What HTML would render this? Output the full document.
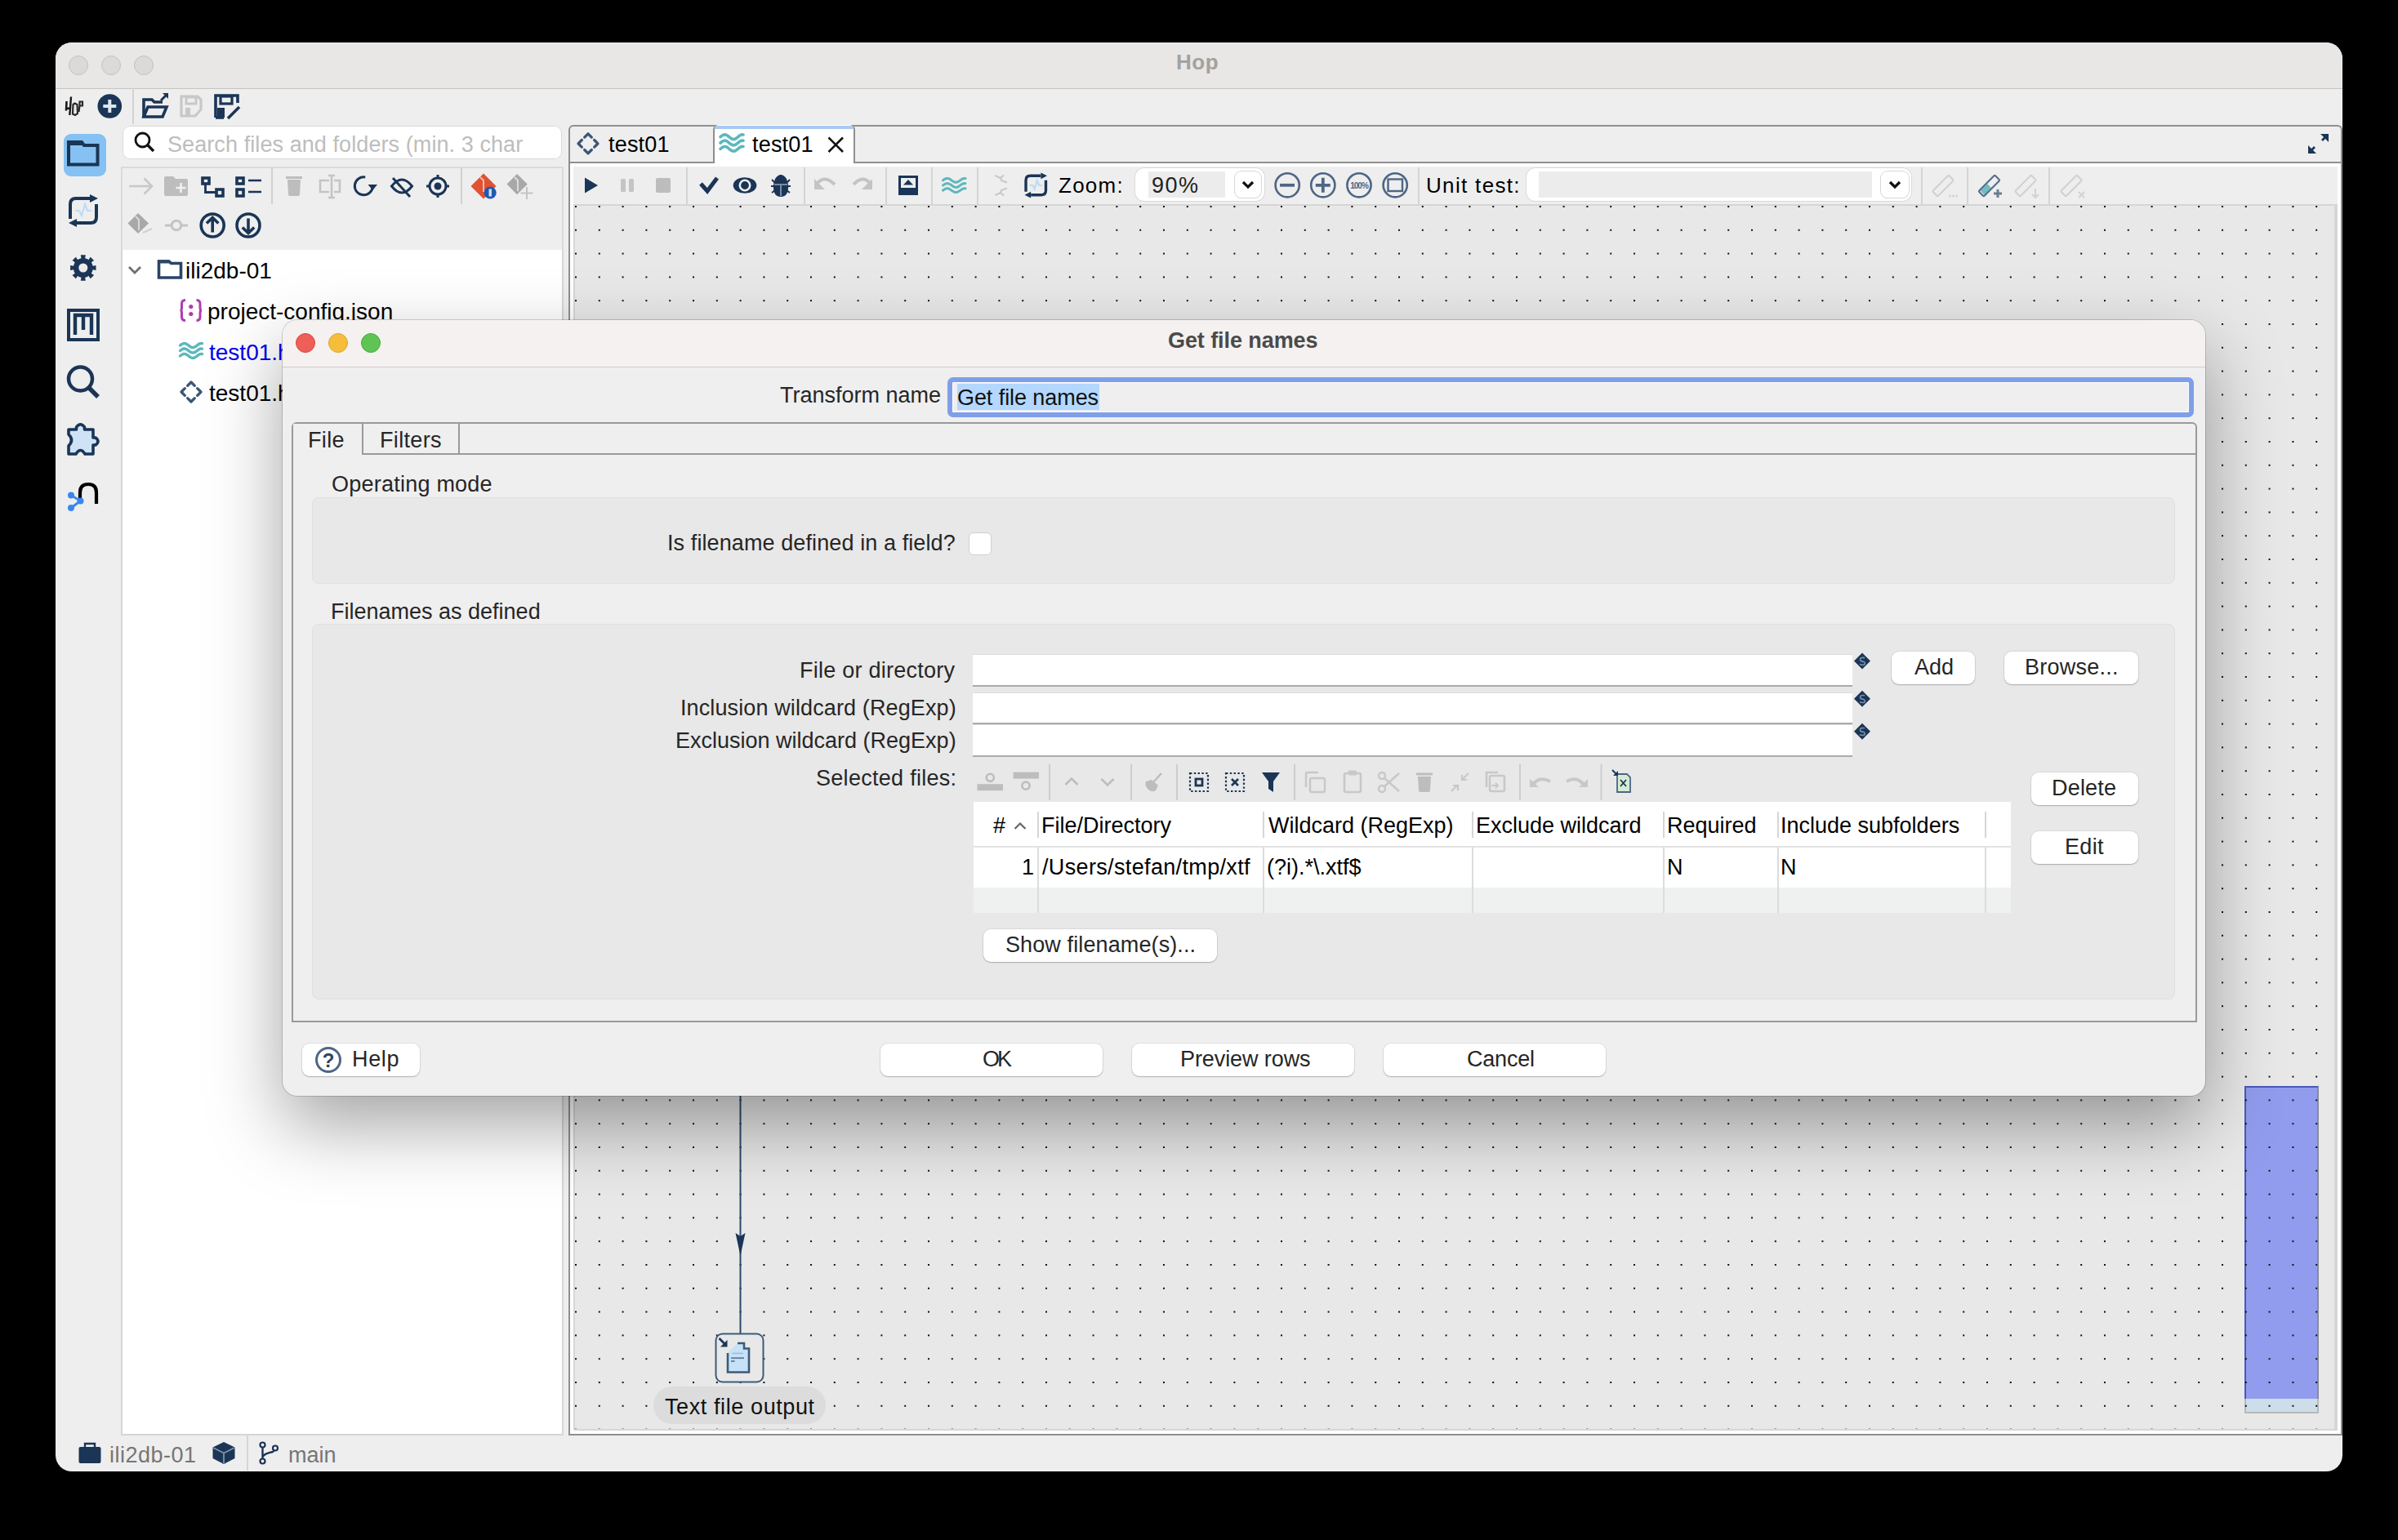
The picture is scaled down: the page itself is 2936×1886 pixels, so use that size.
<!DOCTYPE html>
<html><head><meta charset="utf-8"><title>Hop - Get file names</title>
<style>
html,body{margin:0;padding:0;}
body{width:2936px;height:1886px;background:#000;position:relative;overflow:hidden;font-family:"Liberation Sans", sans-serif;}
</style></head><body>
<div style="position:absolute;left:68px;top:52px;width:2800px;height:1750px;border-radius:20px;background:#eeeeee;overflow:hidden"></div>
<div style="position:absolute;left:68px;top:52px;width:2800px;height:56px;background:#e9e7e5;border-radius:20px 20px 0 0;border-bottom:1px solid #c4c4c4"></div>
<div style="position:absolute;left:84px;top:68px;width:24px;height:24px;border-radius:50%;background:#dcdad9;border:1px solid #c4c2c1;box-sizing:border-box"></div>
<div style="position:absolute;left:124px;top:68px;width:24px;height:24px;border-radius:50%;background:#dcdad9;border:1px solid #c4c2c1;box-sizing:border-box"></div>
<div style="position:absolute;left:164px;top:68px;width:24px;height:24px;border-radius:50%;background:#dcdad9;border:1px solid #c4c2c1;box-sizing:border-box"></div>
<div style="position:absolute;left:1440.00px;top:63px;font-size:26px;line-height:1;color:#a2a2a0;white-space:nowrap;font-weight:700;letter-spacing:0.500px;">Hop</div>
<div style="position:absolute;left:150px;top:154px;width:538px;height:41px;background:#fff;border-radius:9px;box-shadow:0 0 0 1px #d9d9d9 inset"></div>
<div style="position:absolute;left:205.00px;top:164px;font-size:27px;line-height:1;color:#bdbdbd;white-space:nowrap;letter-spacing:0.083px;">Search files and folders (min. 3 char</div>
<div style="position:absolute;left:148px;top:204px;width:542px;height:102px;border:2px solid #dadada;border-bottom:none;box-sizing:border-box"></div>
<div style="position:absolute;left:148px;top:306px;width:542px;height:1452px;background:#fff;border-left:2px solid #d6d6d6;border-right:2px solid #d6d6d6;border-bottom:2px solid #d6d6d6;box-sizing:border-box"></div>
<div style="position:absolute;left:227.00px;top:318px;font-size:28px;line-height:1;color:#000;white-space:nowrap;">ili2db-01</div>
<div style="position:absolute;left:254.00px;top:368px;font-size:28px;line-height:1;color:#000;white-space:nowrap;">project-config.json</div>
<div style="position:absolute;left:256.00px;top:418px;font-size:28px;line-height:1;color:#0000ee;white-space:nowrap;">test01.hwf</div>
<div style="position:absolute;left:256.00px;top:468px;font-size:28px;line-height:1;color:#000;white-space:nowrap;">test01.hpl</div>
<div style="position:absolute;left:696px;top:153px;width:2172px;height:47px;border:2px solid #8f8f8f;border-bottom:none;border-radius:6px 6px 0 0;box-sizing:border-box"></div>
<div style="position:absolute;left:696px;top:198px;width:2172px;height:2px;background:#8f8f8f"></div>
<div style="position:absolute;left:873px;top:153px;width:174px;height:47px;background:#fff;border-left:2px solid #8f8f8f;border-right:2px solid #8f8f8f;border-radius:6px 6px 0 0;box-sizing:border-box"></div>
<div style="position:absolute;left:875px;top:154px;width:170px;height:4px;background:#a8c9f4;border-radius:4px 4px 0 0"></div>
<div style="position:absolute;left:745.00px;top:164px;font-size:27px;line-height:1;color:#000;white-space:nowrap;letter-spacing:0.200px;">test01</div>
<div style="position:absolute;left:921.00px;top:164px;font-size:27px;line-height:1;color:#000;white-space:nowrap;letter-spacing:0.200px;">test01</div>
<div style="position:absolute;left:696px;top:200px;width:2172px;height:1558px;border-left:2px solid #8f8f8f;border-right:2px solid #8f8f8f;border-bottom:2px solid #8f8f8f;box-sizing:border-box;background:#fff"></div>
<div style="position:absolute;left:702px;top:204px;width:2160px;height:46px;background:#eeeeee"></div>
<div style="position:absolute;left:1296.00px;top:214px;font-size:26px;line-height:1;color:#000;white-space:nowrap;letter-spacing:1.250px;">Zoom:</div>
<div style="position:absolute;left:1746.00px;top:214px;font-size:26px;line-height:1;color:#000;white-space:nowrap;letter-spacing:1.333px;">Unit test:</div>
<div style="position:absolute;left:702px;top:250px;width:2160px;height:1502px;background:#d6d6d6"></div>
<div style="position:absolute;left:704px;top:252px;width:2154px;height:1498px;background:#e8e8e8"></div>
<div style="position:absolute;left:2748px;top:1330px;width:91px;height:383px;background:#919cee;border-top:2px solid #4a58b8;border-left:2px solid #4a58b8;border-right:2px solid #8a8a9a;box-sizing:border-box"></div>
<div style="position:absolute;left:2748px;top:1713px;width:91px;height:18px;background:#cddde9;border:2px solid #b8b8b8;border-top:none;box-sizing:border-box"></div>
<svg style="position:absolute;left:704px;top:252px" width="2154" height="1498"><defs><pattern id="dots" x="0" y="0" width="28.8" height="28.8" patternUnits="userSpaceOnUse"><rect x="0" y="0" width="2" height="2" fill="#111"/></pattern></defs><rect width="2154" height="1498" fill="url(#dots)"/></svg>
<div style="position:absolute;left:800px;top:1698px;width:211px;height:46px;background:#dcdcdc;border-radius:23px"></div>
<div style="position:absolute;left:814.00px;top:1710px;font-size:27px;line-height:1;color:#111;white-space:nowrap;letter-spacing:0.600px;">Text file output</div>
<div style="position:absolute;left:1390px;top:205.5px;width:158px;height:40.5px;background:#fff;border-radius:11px;box-shadow:0 0 0 1px #dadada"></div>
<div style="position:absolute;left:1406px;top:210px;width:94px;height:32px;background:#ececec"></div>
<div style="position:absolute;left:1410.00px;top:214px;font-size:27px;line-height:1;color:#222;white-space:nowrap;letter-spacing:1.500px;">90%</div>
<div style="position:absolute;left:1512px;top:210px;width:32px;height:32px;background:#fff;border-radius:8px;box-shadow:0 0 0 1px #d8d8d8, 0 1px 1px rgba(0,0,0,0.15)"></div>
<svg style="position:absolute;left:1512px;top:210px" width="32" height="32"><path d="M10,13 L16,19 L22,13" fill="none" stroke="#111" stroke-width="3.2"/></svg>
<div style="position:absolute;left:1869px;top:205.5px;width:471px;height:40.5px;background:#fff;border-radius:11px;box-shadow:0 0 0 1px #dadada"></div>
<div style="position:absolute;left:1884px;top:210px;width:408px;height:32px;background:#ececec"></div>
<div style="position:absolute;left:2303px;top:210px;width:34px;height:32px;background:#fff;border-radius:8px;box-shadow:0 0 0 1px #d8d8d8, 0 1px 1px rgba(0,0,0,0.15)"></div>
<svg style="position:absolute;left:2303px;top:210px" width="34" height="32"><path d="M11,13 L17,19 L23,13" fill="none" stroke="#111" stroke-width="3.2"/></svg>
<svg style="position:absolute;left:0;top:0" width="2936" height="1886" viewBox="0 0 2936 1886"><path d="M81.5,124 L81,135.5 M81,132.8 L85.5,132.8" fill="none" stroke="#1a1a1a" stroke-width="2.6" stroke-linecap="butt" stroke-linejoin="miter" /><path d="M87,118.5 L85.3,141" fill="none" stroke="#1a1a1a" stroke-width="2.4" stroke-linecap="butt" stroke-linejoin="miter" /><path d="M89.5,128 L91.5,126.5 L94.5,128 L95,139 L92,141 L89,139.5 Z" fill="none" stroke="#2a2a2a" stroke-width="2.2" stroke-linecap="butt" stroke-linejoin="miter" /><path d="M97.5,124.5 L101,124.5 L101,129.5 L97.5,129.5 Z M97.5,129 L96.5,137" fill="none" stroke="#2a2a2a" stroke-width="2.2" stroke-linecap="butt" stroke-linejoin="miter" /><circle cx="134.3" cy="130" r="14.8" fill="#1a3556"/><rect x="126.3" y="128" width="16" height="4" rx="0" fill="#dfe6ee"/><rect x="132.3" y="122" width="4" height="16" rx="0" fill="#dfe6ee"/><rect x="162" y="108" width="2" height="44" rx="0" fill="#d2d2d2"/><path d="M176,143 L176,122 L186,122 L189,125 L199,125" fill="none" stroke="#1a3556" stroke-width="3.6" stroke-linecap="butt" stroke-linejoin="miter" /><path d="M176,143 L181,131 L204,131 L199,143 Z" fill="none" stroke="#1a3556" stroke-width="3.6" stroke-linecap="butt" stroke-linejoin="miter" /><path d="M197,123 L203,117" fill="none" stroke="#1a3556" stroke-width="3" stroke-linecap="butt" stroke-linejoin="miter" /><path d="M199,114 L206,114 L206,121 Z" fill="#1a3556" /><path d="M222,118 L242,118 L246,122 L246,134 L239,142 L222,142 Z" fill="none" stroke="#c8c8c8" stroke-width="3.2" stroke-linecap="butt" stroke-linejoin="miter" /><rect x="228" y="119" width="12" height="8" rx="0" fill="none" stroke="#c8c8c8" stroke-width="3"/><rect x="227" y="132" width="6" height="9" rx="0" fill="#c8c8c8"/><path d="M264,144 L264,117 L291,117 L291,126" fill="none" stroke="#1a3556" stroke-width="3.6" stroke-linecap="butt" stroke-linejoin="miter" /><rect x="270" y="118" width="14" height="9" rx="0" fill="none" stroke="#1a3556" stroke-width="3.2"/><path d="M264,144 L274,144" fill="none" stroke="#1a3556" stroke-width="3.6" stroke-linecap="butt" stroke-linejoin="miter" /><rect x="266" y="132" width="9" height="12" rx="0" fill="#1a3556"/><path d="M279,145 L293,131" fill="none" stroke="#1a3556" stroke-width="3.6" stroke-linecap="butt" stroke-linejoin="miter" /><rect x="78" y="164" width="52" height="52" rx="9" fill="#85c1f2"/><path d="M84,201.5 L84,174 L100,174 L103,178 L119.5,178 L119.5,201.5 Z" fill="none" stroke="#1a3556" stroke-width="4" stroke-linecap="butt" stroke-linejoin="miter" /><rect x="84" y="172" width="17" height="6" rx="0" fill="#1a3556"/><path d="M86.0,268.0 L86.0,250.0 Q86.0,243.0 93.0,243.0 L110.0,243.0" fill="none" stroke="#1a3556" stroke-width="4" stroke-linecap="butt" stroke-linejoin="miter" /><path d="M110.0,238 L120,243.0 L110.0,248.0 Z" fill="#1a3556" /><path d="M118.0,250.0 L118.0,266.0 Q118.0,273.0 111.0,273.0 L94.0,273.0" fill="none" stroke="#1a3556" stroke-width="4" stroke-linecap="butt" stroke-linejoin="miter" /><path d="M94.0,268.0 L84,273.0 L94.0,278 Z" fill="#1a3556" /><path d="M92.0,258.0 L97.0,258.0 L100.0,264.0 L104.0,250.0 L107.0,258.0 L112.0,258.0" fill="none" stroke="#bcdcf5" stroke-width="2.2" stroke-linecap="butt" stroke-linejoin="miter" /><path d="M101.8, 328 L117.51,324.95 L117.51,331.05 Z M101.8, 328 L115.06,336.95 L110.75,341.26 Z M101.8, 328 L104.85,343.71 L98.75,343.71 Z M101.8, 328 L92.85,341.26 L88.54,336.95 Z M101.8, 328 L86.09,331.05 L86.09,324.95 Z M101.8, 328 L88.54,319.05 L92.85,314.74 Z M101.8, 328 L98.75,312.29 L104.85,312.29 Z M101.8, 328 L110.75,314.74 L115.06,319.05 Z" fill="#1a3556" /><circle cx="101.8" cy="328" r="12" fill="#1a3556"/><circle cx="101.8" cy="328" r="5.5" fill="#ececec"/><rect x="84" y="380" width="36" height="36" rx="0" fill="none" stroke="#1a3556" stroke-width="4"/><path d="M92,410 L92,386 L112,386 L112,410 M102,386 L102,404" fill="none" stroke="#1a3556" stroke-width="4.4" stroke-linecap="butt" stroke-linejoin="miter" /><circle cx="98.5" cy="464" r="14.5" fill="none" stroke="#1a3556" stroke-width="4.5"/><path d="M109,475 L120,486" fill="none" stroke="#1a3556" stroke-width="5.5" stroke-linecap="butt" stroke-linejoin="miter" /><path d="M84,526 L93.5,526 L93.5,523 Q98.5,516.5 103.5,523 L103.5,526 L114,526 L114,536 L117,536 Q123,540.5 117,545 L114,545 L114,556 L104,556 Q98.5,547 93,556 L84,556 L84,546 Q91,539 84,532 Z" fill="#cfe3f7" stroke="#1a3556" stroke-width="3.6" stroke-linejoin="round"/><path d="M98,617 L98,603 Q98,593 108,593 Q118,593 118,603 L118,617" fill="none" stroke="#000" stroke-width="4.2" stroke-linecap="butt" stroke-linejoin="miter" /><path d="M87,606.5 L98.5,613.5 L87,622" fill="none" stroke="#3a86f0" stroke-width="3" stroke-linecap="butt" stroke-linejoin="miter" /><circle cx="87" cy="606.5" r="4" fill="#3a86f0"/><circle cx="98.5" cy="613.5" r="4" fill="#3a86f0"/><circle cx="87" cy="622" r="4" fill="#3a86f0"/><circle cx="174.5" cy="171.5" r="8.5" fill="none" stroke="#111" stroke-width="2.8"/><path d="M180.5,177.5 L188,185" fill="none" stroke="#111" stroke-width="3.4" stroke-linecap="butt" stroke-linejoin="miter" /><path d="M158,228 L185,228 M176.5,218.5 L186,228 L176.5,237.5" fill="none" stroke="#c8c8c8" stroke-width="2.6" stroke-linecap="butt" stroke-linejoin="miter" /><path d="M201,218 Q201,216 203,216 L212,216 L215,219 L228,219 Q230,219 230,221 L230,238 Q230,240 228,240 L203,240 Q201,240 201,238 Z" fill="#bdbdbd" /><path d="M215.5,230 L227.5,230 M221.5,224 L221.5,236" fill="none" stroke="#f0f0f0" stroke-width="2.6" stroke-linecap="butt" stroke-linejoin="miter" /><rect x="248" y="218" width="8" height="7" rx="0" fill="none" stroke="#1a3556" stroke-width="3.6"/><rect x="265" y="232" width="8" height="8" rx="0" fill="none" stroke="#1a3556" stroke-width="3.6"/><path d="M251.5,226 L251.5,235.5 L264,235.5" fill="none" stroke="#1a3556" stroke-width="2.8" stroke-linecap="butt" stroke-linejoin="miter" /><rect x="290" y="218" width="8" height="7" rx="0" fill="none" stroke="#1a3556" stroke-width="3.6"/><rect x="290" y="232" width="8" height="8" rx="0" fill="none" stroke="#1a3556" stroke-width="3.6"/><path d="M304,221 L320,221 M304,235 L320,235" fill="none" stroke="#1a3556" stroke-width="2.6" stroke-linecap="butt" stroke-linejoin="miter" /><rect x="332" y="206" width="2" height="44" rx="0" fill="#d0d0d0"/><rect x="350" y="216" width="20" height="3" rx="0" fill="#bdbdbd"/><path d="M352,220 L368,220 L367,238 Q367,240 365,240 L355,240 Q353,240 353,238 Z" fill="#bdbdbd" /><path d="M403,221 L392,221 L392,235 L403,235 M409,221 L416,221 L416,235 L409,235 M406,215 L406,242 M402,215 L410,215 M402,242 L410,242" fill="none" stroke="#c4c4c4" stroke-width="2.6" stroke-linecap="butt" stroke-linejoin="miter" /><path d="M447.2,217 A11,11 0 1 0 456.3,228" fill="none" stroke="#1a3556" stroke-width="3" stroke-linecap="butt" stroke-linejoin="miter" /><path d="M450.5,226 L462,226 L456.3,233 Z" fill="#1a3556" /><path d="M479.5,228 Q492,212 504.5,228 Q492,244 479.5,228 Z" fill="none" stroke="#1a3556" stroke-width="3" stroke-linecap="butt" stroke-linejoin="miter" /><path d="M481,218 L502,241" fill="none" stroke="#1a3556" stroke-width="3" stroke-linecap="butt" stroke-linejoin="miter" /><circle cx="536" cy="228" r="10" fill="none" stroke="#1a3556" stroke-width="3"/><circle cx="536" cy="228" r="4.5" fill="#1a3556"/><path d="M536,214 L536,219 M536,237 L536,242 M522,228 L527,228 M545,228 L550,228" fill="none" stroke="#1a3556" stroke-width="3" stroke-linecap="butt" stroke-linejoin="miter" /><rect x="564" y="206" width="2" height="44" rx="0" fill="#d0d0d0"/><path d="M592,212.5 L607.5,228 L592,243.5 L576.5,228 Z" fill="#e05232" /><path d="M588,217 L592,221 L592,235" fill="none" stroke="#f5b9aa" stroke-width="2" stroke-linecap="butt" stroke-linejoin="miter" /><circle cx="600.2" cy="236" r="7.5" fill="#1f5ab0"/><rect x="598.5" y="231.5" width="3.4" height="9" rx="0" fill="#cfe0f5"/><path d="M633,213 L645.8,225.6 L633,238.2 L620.5,225.6 Z" fill="#a8a8a8" /><path d="M630,217 L634,221 L634,234" fill="none" stroke="#dcdcdc" stroke-width="2" stroke-linecap="butt" stroke-linejoin="miter" /><path d="M645,229 L645,244 M637.5,236.5 L652.5,236.5" fill="none" stroke="#c4c4c4" stroke-width="2" stroke-linecap="butt" stroke-linejoin="miter" /><path d="M169,261 L182,273.5 L169,286 L156.5,273.5 Z" fill="#a8a8a8" /><path d="M166,265 L170,269 L170,282" fill="none" stroke="#d8d8d8" stroke-width="2" stroke-linecap="butt" stroke-linejoin="miter" /><path d="M175,285 L186,280" fill="none" stroke="#d0d0d0" stroke-width="2" stroke-linecap="butt" stroke-linejoin="miter" /><path d="M202,276 L210,276 M222,276 L230,276" fill="none" stroke="#c4c4c4" stroke-width="3.2" stroke-linecap="butt" stroke-linejoin="miter" /><circle cx="216" cy="276" r="5.8" fill="none" stroke="#c4c4c4" stroke-width="3"/><circle cx="260.2" cy="276" r="14" fill="none" stroke="#1a3556" stroke-width="3.6"/><path d="M260.2,284.5 L260.2,268 M253,273.5 L260.2,266.5 L267.4,273.5" fill="none" stroke="#1a3556" stroke-width="3.6" stroke-linecap="butt" stroke-linejoin="miter" /><circle cx="304" cy="276" r="14" fill="none" stroke="#1a3556" stroke-width="3.6"/><path d="M304,267.5 L304,284 M296.8,278.5 L304,285.5 L311.2,278.5" fill="none" stroke="#1a3556" stroke-width="3.6" stroke-linecap="butt" stroke-linejoin="miter" /><path d="M158,327 L165,334 L172,327" fill="none" stroke="#707070" stroke-width="2.8" stroke-linecap="butt" stroke-linejoin="miter" /><path d="M194.5,340 L194.5,320 L207,320 L209.5,322.5 L221.5,322.5 L221.5,340 Z" fill="none" stroke="#2b4566" stroke-width="3.6" stroke-linecap="butt" stroke-linejoin="miter" /><rect x="193" y="318.5" width="14" height="4" rx="0" fill="#2b4566"/><path d="M227,367.5 Q222.5,367.5 222.5,372 L222.5,377 Q222.5,380 220.5,380 Q222.5,380 222.5,383 L222.5,388 Q222.5,392.5 227,392.5" fill="none" stroke="#b23bb4" stroke-width="3" stroke-linecap="butt" stroke-linejoin="miter" /><path d="M240.5,367.5 Q245,367.5 245,372 L245,377 Q245,380 247,380 Q245,380 245,383 L245,388 Q245,392.5 240.5,392.5" fill="none" stroke="#b23bb4" stroke-width="3" stroke-linecap="butt" stroke-linejoin="miter" /><circle cx="233.8" cy="375.5" r="2.6" fill="#b23bb4"/><circle cx="233.8" cy="384.5" r="2.6" fill="#b23bb4"/><polyline points="220.50,423.06 221.62,422.22 222.75,421.47 223.88,420.90 225.00,420.59 226.12,420.55 227.25,420.81 228.38,421.32 229.50,422.03 230.62,422.86 231.75,423.71 232.88,424.49 234.00,425.11 235.12,425.49 236.25,425.59 237.38,425.40 238.50,424.94 239.62,424.27 240.75,423.46 241.88,422.60 243.00,421.80 244.12,421.14 245.25,420.70 246.38,420.53 247.50,420.65" fill="none" stroke="#5cb8bc" stroke-width="3.4" stroke-linecap="round"/><polyline points="220.50,429.50 221.62,428.66 222.75,427.91 223.88,427.34 225.00,427.03 226.12,426.99 227.25,427.25 228.38,427.76 229.50,428.47 230.62,429.30 231.75,430.15 232.88,430.93 234.00,431.55 235.12,431.93 236.25,432.03 237.38,431.84 238.50,431.38 239.62,430.71 240.75,429.90 241.88,429.04 243.00,428.24 244.12,427.58 245.25,427.14 246.38,426.97 247.50,427.09" fill="none" stroke="#5cb8bc" stroke-width="3.4" stroke-linecap="round"/><polyline points="220.50,435.94 221.62,435.10 222.75,434.35 223.88,433.78 225.00,433.47 226.12,433.43 227.25,433.69 228.38,434.20 229.50,434.91 230.62,435.74 231.75,436.59 232.88,437.37 234.00,437.99 235.12,438.37 236.25,438.47 237.38,438.28 238.50,437.82 239.62,437.15 240.75,436.34 241.88,435.48 243.00,434.68 244.12,434.02 245.25,433.58 246.38,433.41 247.50,433.53" fill="none" stroke="#5cb8bc" stroke-width="3.4" stroke-linecap="round"/><path d="M229.68,472.32 L234,468 L238.32,472.32" fill="none" stroke="#3a5676" stroke-width="3.3" stroke-linecap="round" stroke-linejoin="round"/><path d="M241.68,475.68 L246,480 L241.68,484.32" fill="none" stroke="#3a5676" stroke-width="3.3" stroke-linecap="round" stroke-linejoin="round"/><path d="M238.32,487.68 L234,492 L229.68,487.68" fill="none" stroke="#3a5676" stroke-width="3.3" stroke-linecap="round" stroke-linejoin="round"/><path d="M226.32,484.32 L222,480 L226.32,475.68" fill="none" stroke="#3a5676" stroke-width="3.3" stroke-linecap="round" stroke-linejoin="round"/><path d="M715.68,168.12 L720,163.8 L724.32,168.12" fill="none" stroke="#3a5676" stroke-width="3.3" stroke-linecap="round" stroke-linejoin="round"/><path d="M727.68,171.48 L732,175.8 L727.68,180.12" fill="none" stroke="#3a5676" stroke-width="3.3" stroke-linecap="round" stroke-linejoin="round"/><path d="M724.32,183.48 L720,187.8 L715.68,183.48" fill="none" stroke="#3a5676" stroke-width="3.3" stroke-linecap="round" stroke-linejoin="round"/><path d="M712.32,180.12 L708,175.8 L712.32,171.48" fill="none" stroke="#3a5676" stroke-width="3.3" stroke-linecap="round" stroke-linejoin="round"/><polyline points="882.00,167.72 883.17,166.77 884.33,165.92 885.50,165.28 886.67,164.92 887.83,164.88 889.00,165.17 890.17,165.75 891.33,166.56 892.50,167.50 893.67,168.46 894.83,169.34 896.00,170.03 897.17,170.46 898.33,170.58 899.50,170.36 900.67,169.85 901.83,169.08 903.00,168.17 904.17,167.20 905.33,166.29 906.50,165.55 907.67,165.05 908.83,164.86 910.00,165.00" fill="none" stroke="#5cb8bc" stroke-width="3.6" stroke-linecap="round"/><polyline points="882.00,175.00 883.17,174.05 884.33,173.20 885.50,172.56 886.67,172.20 887.83,172.16 889.00,172.45 890.17,173.03 891.33,173.84 892.50,174.78 893.67,175.74 894.83,176.62 896.00,177.31 897.17,177.74 898.33,177.86 899.50,177.64 900.67,177.13 901.83,176.36 903.00,175.45 904.17,174.48 905.33,173.57 906.50,172.83 907.67,172.33 908.83,172.14 910.00,172.28" fill="none" stroke="#5cb8bc" stroke-width="3.6" stroke-linecap="round"/><polyline points="882.00,182.28 883.17,181.33 884.33,180.48 885.50,179.84 886.67,179.48 887.83,179.44 889.00,179.73 890.17,180.31 891.33,181.12 892.50,182.06 893.67,183.02 894.83,183.90 896.00,184.59 897.17,185.02 898.33,185.14 899.50,184.92 900.67,184.41 901.83,183.64 903.00,182.73 904.17,181.76 905.33,180.85 906.50,180.11 907.67,179.61 908.83,179.42 910.00,179.56" fill="none" stroke="#5cb8bc" stroke-width="3.6" stroke-linecap="round"/><path d="M1014.5,168.5 L1032,186 M1032,168.5 L1014.5,186" fill="none" stroke="#111" stroke-width="2.6" stroke-linecap="butt" stroke-linejoin="miter" /><path d="M2828,186 L2834,180 M2849,166 L2843,172" fill="none" stroke="#1a3556" stroke-width="2.8" stroke-linecap="butt" stroke-linejoin="miter" /><path d="M2826,188 L2826,178 L2836,188 Z" fill="#1a3556" /><path d="M2851,164 L2851,174 L2841,164 Z" fill="#1a3556" /><path d="M716,217.5 L732,227 L716,236.5 Z" fill="#1a3556" /><rect x="760" y="219" width="6" height="16" rx="1.5" fill="#c4c4c4"/><rect x="770" y="219" width="6" height="16" rx="1.5" fill="#c4c4c4"/><rect x="803" y="218" width="18" height="18" rx="2" fill="#bdbdbd"/><rect x="840" y="205" width="2" height="45" rx="0" fill="#d4d4d4"/><rect x="984" y="205" width="2" height="45" rx="0" fill="#d4d4d4"/><rect x="1084" y="205" width="2" height="45" rx="0" fill="#d4d4d4"/><rect x="1140" y="205" width="2" height="45" rx="0" fill="#d4d4d4"/><rect x="1196" y="205" width="2" height="45" rx="0" fill="#d4d4d4"/><rect x="1736" y="205" width="2" height="45" rx="0" fill="#d4d4d4"/><rect x="2352" y="205" width="2" height="45" rx="0" fill="#d4d4d4"/><rect x="2408" y="205" width="2" height="45" rx="0" fill="#d4d4d4"/><rect x="2508" y="205" width="2" height="45" rx="0" fill="#d4d4d4"/><path d="M858,225 L866,234 L878,218" fill="none" stroke="#1a3556" stroke-width="5" stroke-linecap="butt" stroke-linejoin="miter" /><ellipse cx="912" cy="227" rx="14.3" ry="9.8" fill="#1a3556"/><circle cx="912" cy="227" r="6.2" fill="none" stroke="#eeeeee" stroke-width="2.6"/><circle cx="912" cy="227" r="3.6" fill="#1a3556"/><path d="M949,219 Q956,209 963,219 L965,226 Q966,241 956,241 Q946,241 947,226 Z" fill="#1a3556" /><path d="M945,220 L949,224 M967,220 L963,224 M944,228 L948,228 M968,228 L964,228 M945,236 L949,233 M967,236 L963,233" fill="none" stroke="#1a3556" stroke-width="2" stroke-linecap="butt" stroke-linejoin="miter" /><path d="M948,226 L964,226 M956,226 L956,240" fill="none" stroke="#7a8ba0" stroke-width="2" stroke-linecap="butt" stroke-linejoin="miter" /><path d="M1001,224 Q1010,214 1022,226" fill="none" stroke="#c4c4c4" stroke-width="4" stroke-linecap="butt" stroke-linejoin="miter" /><path d="M997,219 L997,232 L1010,232 Z" fill="#c4c4c4" /><path d="M1045,226 Q1056,214 1065,224" fill="none" stroke="#c4c4c4" stroke-width="4" stroke-linecap="butt" stroke-linejoin="miter" /><path d="M1068,219 L1068,232 L1055,232 Z" fill="#c4c4c4" /><rect x="1101.5" y="216.5" width="21" height="21" rx="0" fill="none" stroke="#1a3556" stroke-width="3"/><rect x="1101" y="230" width="22" height="9" rx="0" fill="#1a3556"/><path d="M1106,226.5 L1112,220 L1118,226.5 Z" fill="#1a3556" /><polyline points="1154.50,220.84 1155.65,220.03 1156.79,219.32 1157.94,218.78 1159.08,218.47 1160.23,218.44 1161.38,218.68 1162.52,219.17 1163.67,219.86 1164.81,220.65 1165.96,221.47 1167.10,222.21 1168.25,222.80 1169.40,223.16 1170.54,223.26 1171.69,223.08 1172.83,222.64 1173.98,221.99 1175.12,221.22 1176.27,220.40 1177.42,219.63 1178.56,219.00 1179.71,218.58 1180.85,218.42 1182.00,218.54" fill="none" stroke="#5cb8bc" stroke-width="3" stroke-linecap="round"/><polyline points="1154.50,227.00 1155.65,226.19 1156.79,225.48 1157.94,224.94 1159.08,224.63 1160.23,224.60 1161.38,224.84 1162.52,225.33 1163.67,226.02 1164.81,226.81 1165.96,227.63 1167.10,228.37 1168.25,228.96 1169.40,229.32 1170.54,229.42 1171.69,229.24 1172.83,228.80 1173.98,228.15 1175.12,227.38 1176.27,226.56 1177.42,225.79 1178.56,225.16 1179.71,224.74 1180.85,224.58 1182.00,224.70" fill="none" stroke="#5cb8bc" stroke-width="3" stroke-linecap="round"/><polyline points="1154.50,233.16 1155.65,232.35 1156.79,231.64 1157.94,231.10 1159.08,230.79 1160.23,230.76 1161.38,231.00 1162.52,231.49 1163.67,232.18 1164.81,232.97 1165.96,233.79 1167.10,234.53 1168.25,235.12 1169.40,235.48 1170.54,235.58 1171.69,235.40 1172.83,234.96 1173.98,234.31 1175.12,233.54 1176.27,232.72 1177.42,231.95 1178.56,231.32 1179.71,230.90 1180.85,230.74 1182.00,230.86" fill="none" stroke="#5cb8bc" stroke-width="3" stroke-linecap="round"/><path d="M1218.5,215 L1225,218 L1229,214.5 M1225,218 L1226,221 L1233,223.5 M1218.5,239 L1225,236 L1229,239.5 M1225,236 L1226,233 L1233,230.5" fill="none" stroke="#c8c8c8" stroke-width="2.2" stroke-linecap="butt" stroke-linejoin="miter" /><path d="M1256.0277777777778,234.86111111111111 L1256.0277777777778,220.66666666666669 Q1256.0277777777778,215.31944444444446 1261.375,215.31944444444446 L1274.361111111111,215.31944444444446" fill="none" stroke="#1a3556" stroke-width="3.4" stroke-linecap="butt" stroke-linejoin="miter" /><path d="M1274.361111111111,211.5 L1282.0,215.31944444444446 L1274.361111111111,219.13888888888889 Z" fill="#1a3556" /><path d="M1280.4722222222222,220.66666666666666 L1280.4722222222222,233.33333333333331 Q1280.4722222222222,238.68055555555554 1275.125,238.68055555555554 L1262.138888888889,238.68055555555554" fill="none" stroke="#1a3556" stroke-width="3.4" stroke-linecap="butt" stroke-linejoin="miter" /><path d="M1262.138888888889,234.86111111111111 L1254.5,238.68055555555554 L1262.138888888889,242.5 Z" fill="#1a3556" /><path d="M1260.611111111111,227.0 L1264.4305555555557,227.0 L1266.7222222222222,231.58333333333334 L1269.7777777777778,220.88888888888889 L1272.0694444444443,227.0 L1275.888888888889,227.0" fill="none" stroke="#bcdcf5" stroke-width="2.2" stroke-linecap="butt" stroke-linejoin="miter" /><circle cx="1576.2" cy="226.8" r="14.6" fill="none" stroke="#4e6685" stroke-width="2.6"/><circle cx="1619.8" cy="226.8" r="14.6" fill="none" stroke="#4e6685" stroke-width="2.6"/><circle cx="1664" cy="226.8" r="14.6" fill="none" stroke="#4e6685" stroke-width="2.6"/><circle cx="1708.2" cy="226.8" r="14.6" fill="none" stroke="#4e6685" stroke-width="2.6"/><path d="M1567,226.8 L1585,226.8" fill="none" stroke="#4e6685" stroke-width="3.8" stroke-linecap="butt" stroke-linejoin="miter" /><path d="M1610.8,226.8 L1628.8,226.8 M1619.8,217.8 L1619.8,235.8" fill="none" stroke="#4e6685" stroke-width="3.8" stroke-linecap="butt" stroke-linejoin="miter" /><text x="1664" y="230.5" font-size="10" font-weight="700" text-anchor="middle" fill="#4e6685" font-family="Liberation Sans" letter-spacing="-1">100%</text><rect x="1699.5" y="219.5" width="17.5" height="14.5" rx="0" fill="none" stroke="#4e6685" stroke-width="2.4"/><rect x="-4.5" y="-14" width="9" height="28" rx="1.5" fill="none" stroke="#d2d2d2" stroke-width="2.2" transform="translate(2379,227.5) rotate(45)"/><path d="M2386,240 L2397,240" fill="none" stroke="#d2d2d2" stroke-width="2.4" stroke-linecap="butt" stroke-linejoin="miter" stroke-dasharray="2.6 1.6"/><rect x="-3.5" y="0" width="7" height="12" fill="#6cbfc4" transform="translate(2435.5,227.5) rotate(45)"/><rect x="-4.5" y="-14" width="9" height="28" rx="1.5" fill="none" stroke="#5a6e88" stroke-width="2.2" transform="translate(2435.5,227.5) rotate(45)"/><path d="M2441,237 L2451,237 M2446,232 L2446,242" fill="none" stroke="#6a7d94" stroke-width="3" stroke-linecap="butt" stroke-linejoin="miter" /><rect x="-4.5" y="-14" width="9" height="28" rx="1.5" fill="none" stroke="#d2d2d2" stroke-width="2.2" transform="translate(2480,227.5) rotate(45)"/><path d="M2492,231 L2492,242 M2488,238 L2492,242 L2496,238" fill="none" stroke="#d2d2d2" stroke-width="2" stroke-linecap="butt" stroke-linejoin="miter" /><rect x="-4.5" y="-14" width="9" height="28" rx="1.5" fill="none" stroke="#d2d2d2" stroke-width="2.2" transform="translate(2536,227.5) rotate(45)"/><path d="M2545,235 L2552,242 M2552,235 L2545,242" fill="none" stroke="#d2d2d2" stroke-width="2" stroke-linecap="butt" stroke-linejoin="miter" /><rect x="96.5" y="1772" width="27" height="20" rx="2" fill="#1a3556"/><path d="M104,1773 L104,1768 L116,1768 L116,1773" fill="none" stroke="#1a3556" stroke-width="2.4" stroke-linecap="butt" stroke-linejoin="miter" /><path d="M274,1766 L287.5,1772.5 L287.5,1786 L274,1793 L260.5,1786 L260.5,1772.5 Z" fill="#1a3556" /><path d="M261,1773 L274,1779.5 L287,1773 M274,1779.5 L274,1792" fill="none" stroke="#7f92a8" stroke-width="1.8" stroke-linecap="butt" stroke-linejoin="miter" /><circle cx="321.5" cy="1769.5" r="3" fill="none" stroke="#1a3556" stroke-width="2.2"/><circle cx="321.5" cy="1789.5" r="3" fill="none" stroke="#1a3556" stroke-width="2.2"/><circle cx="337" cy="1773.5" r="3" fill="none" stroke="#1a3556" stroke-width="2.2"/><path d="M321.5,1772.5 L321.5,1786.5 M321.5,1784 Q324,1780 334,1778 L336,1776" fill="none" stroke="#1a3556" stroke-width="2.4" stroke-linecap="butt" stroke-linejoin="miter" /><rect x="905.5" y="1342" width="2" height="291" rx="0" fill="#2d4a6b"/><path d="M900.5,1510 L906.5,1514 L912.5,1510 L906.5,1538 Z" fill="#1a3556" /><rect x="876.5" y="1633.5" width="58" height="59" rx="8" fill="#e8e8e8" stroke="#3d5a7a" stroke-width="2"/><path d="M891,1657 L903,1645 L911,1645 L911,1651.5 L917,1651.5 L917,1680.5 L891,1680.5 Z" fill="#c5e2f8" /><path d="M891,1657 L891,1680.5 L917,1680.5 L917,1651.5 L911,1651.5 L911,1645 L903,1645" fill="none" stroke="#3d5a7a" stroke-width="2.6" stroke-linecap="butt" stroke-linejoin="miter" stroke-linejoin="round"/><path d="M896.5,1657.4 L910,1657.4" fill="none" stroke="#9fb8d0" stroke-width="1.4" stroke-linecap="butt" stroke-linejoin="miter" /><path d="M895,1663.2 L911,1663.2" fill="none" stroke="#5f7a96" stroke-width="1.8" stroke-linecap="butt" stroke-linejoin="miter" /><path d="M895,1667 L899.5,1667" fill="none" stroke="#5f7a96" stroke-width="1.8" stroke-linecap="butt" stroke-linejoin="miter" /><path d="M880.5,1639 L887,1645.5" fill="none" stroke="#1a3556" stroke-width="2.6" stroke-linecap="butt" stroke-linejoin="miter" /><path d="M890.5,1649.5 L890.5,1641 L882,1649.5 Z" fill="#1a3556" /></svg>
<div style="position:absolute;left:134.00px;top:1769px;font-size:27px;line-height:1;color:#767676;white-space:nowrap;letter-spacing:0.500px;">ili2db-01</div>
<div style="position:absolute;left:353.00px;top:1769px;font-size:27px;line-height:1;color:#767676;white-space:nowrap;">main</div>
<div style="position:absolute;left:302px;top:1757px;width:2px;height:44px;background:#d6d6d6"></div>
<div style="position:absolute;left:346px;top:392px;width:2354px;height:950px;background:#efefef;border-radius:18px;box-shadow:0 36px 90px rgba(0,0,0,0.36), 0 0 0 1px rgba(0,0,0,0.16)"></div>
<div style="position:absolute;left:346px;top:392px;width:2354px;height:57px;background:#f4f1f0;border-radius:18px 18px 0 0;border-bottom:1px solid #cfcdcc"></div>
<div style="position:absolute;left:362px;top:408px;width:24px;height:24px;border-radius:50%;background:#ee5f57;border:1px solid #d8473f;box-sizing:border-box"></div>
<div style="position:absolute;left:402px;top:408px;width:24px;height:24px;border-radius:50%;background:#f5bd3a;border:1px solid #dba52c;box-sizing:border-box"></div>
<div style="position:absolute;left:442px;top:408px;width:24px;height:24px;border-radius:50%;background:#5fc454;border:1px solid #4aa83f;box-sizing:border-box"></div>
<div style="position:absolute;left:1430.00px;top:404px;font-size:27px;line-height:1;color:#4a4a4a;white-space:nowrap;font-weight:700;letter-spacing:-0.077px;">Get file names</div>
<div style="position:absolute;left:955.00px;top:471px;font-size:27px;line-height:1;color:#262626;white-space:nowrap;">Transform name</div>
<div style="position:absolute;left:1160px;top:462px;width:1526px;height:49px;border:6px solid #7f9fe9;border-radius:7px;box-sizing:border-box;background:#efefef;box-shadow:inset 0 0 0 1px #fff"></div>
<div style="position:absolute;left:1172px;top:470px;width:174px;height:32px;background:#b3d7ff"></div>
<div style="position:absolute;left:1172.00px;top:474px;font-size:27px;line-height:1;color:#111;white-space:nowrap;letter-spacing:-0.077px;">Get file names</div>
<div style="position:absolute;left:357px;top:517px;width:2333px;height:735px;border:2px solid #9a9a9a;border-radius:6px 6px 0 0;box-sizing:border-box"></div>
<div style="position:absolute;left:357px;top:555px;width:2333px;height:2px;background:#9a9a9a"></div>
<div style="position:absolute;left:443px;top:517px;width:2px;height:40px;background:#9a9a9a"></div>
<div style="position:absolute;left:359px;top:519px;width:84px;height:39px;background:#efefef"></div>
<div style="position:absolute;left:561px;top:517px;width:2px;height:40px;background:#9a9a9a"></div>
<div style="position:absolute;left:377.00px;top:526px;font-size:27px;line-height:1;color:#262626;white-space:nowrap;letter-spacing:0.333px;">File</div>
<div style="position:absolute;left:465.00px;top:526px;font-size:27px;line-height:1;color:#262626;white-space:nowrap;letter-spacing:0.333px;">Filters</div>
<div style="position:absolute;left:406.00px;top:580px;font-size:27px;line-height:1;color:#262626;white-space:nowrap;letter-spacing:0.231px;">Operating mode</div>
<div style="position:absolute;left:382px;top:609px;width:2281px;height:106px;background:#e8e8e8;border:1px solid #e0e0e0;border-radius:8px;box-sizing:border-box"></div>
<div style="position:absolute;left:817.00px;top:652px;font-size:27px;line-height:1;color:#262626;white-space:nowrap;letter-spacing:0.100px;">Is filename defined in a field?</div>
<div style="position:absolute;left:1186px;top:652px;width:28px;height:28px;background:#fff;border:1px solid #cfcfcf;border-radius:6px;box-sizing:border-box"></div>
<div style="position:absolute;left:405.00px;top:736px;font-size:27px;line-height:1;color:#262626;white-space:nowrap;">Filenames as defined</div>
<div style="position:absolute;left:382px;top:764px;width:2281px;height:460px;background:#e8e8e8;border:1px solid #e0e0e0;border-radius:8px;box-sizing:border-box"></div>
<div style="position:absolute;left:979.00px;top:808px;font-size:27px;line-height:1;color:#262626;white-space:nowrap;letter-spacing:0.250px;">File or directory</div>
<div style="position:absolute;left:833.00px;top:854px;font-size:27px;line-height:1;color:#262626;white-space:nowrap;letter-spacing:0.115px;">Inclusion wildcard (RegExp)</div>
<div style="position:absolute;left:827.00px;top:894px;font-size:27px;line-height:1;color:#262626;white-space:nowrap;">Exclusion wildcard (RegExp)</div>
<div style="position:absolute;left:999.00px;top:940px;font-size:27px;line-height:1;color:#262626;white-space:nowrap;letter-spacing:0.286px;">Selected files:</div>
<div style="position:absolute;left:1191px;top:801px;width:1077px;height:40px;background:#fff;border-top:1px solid #dcdcdc;border-bottom:2px solid #ababab;box-sizing:border-box"></div>
<div style="position:absolute;left:1191px;top:848px;width:1077px;height:39px;background:#fff;border-top:1px solid #dcdcdc;border-bottom:2px solid #ababab;box-sizing:border-box"></div>
<div style="position:absolute;left:1191px;top:887px;width:1077px;height:40px;background:#fff;border-top:1px solid #dcdcdc;border-bottom:2px solid #ababab;box-sizing:border-box"></div>
<div style="position:absolute;left:2316px;top:798px;width:102px;height:40px;background:#fff;border-radius:9px;box-shadow:0 0 0 1px rgba(0,0,0,0.06), 0 1px 1.5px rgba(0,0,0,0.22)"></div>
<div style="position:absolute;left:2344.00px;top:804px;font-size:27px;line-height:1;color:#262626;white-space:nowrap;">Add</div>
<div style="position:absolute;left:2454px;top:798px;width:164px;height:40px;background:#fff;border-radius:9px;box-shadow:0 0 0 1px rgba(0,0,0,0.06), 0 1px 1.5px rgba(0,0,0,0.22)"></div>
<div style="position:absolute;left:2479.00px;top:804px;font-size:27px;line-height:1;color:#262626;white-space:nowrap;letter-spacing:0.250px;">Browse...</div>
<div style="position:absolute;left:2487px;top:946px;width:131px;height:40px;background:#fff;border-radius:9px;box-shadow:0 0 0 1px rgba(0,0,0,0.06), 0 1px 1.5px rgba(0,0,0,0.22)"></div>
<div style="position:absolute;left:2512.00px;top:952px;font-size:27px;line-height:1;color:#262626;white-space:nowrap;letter-spacing:0.200px;">Delete</div>
<div style="position:absolute;left:2487px;top:1018px;width:131px;height:40px;background:#fff;border-radius:9px;box-shadow:0 0 0 1px rgba(0,0,0,0.06), 0 1px 1.5px rgba(0,0,0,0.22)"></div>
<div style="position:absolute;left:2528.00px;top:1024px;font-size:27px;line-height:1;color:#262626;white-space:nowrap;letter-spacing:0.333px;">Edit</div>
<div style="position:absolute;left:1192px;top:982px;width:1270px;height:136px;background:#fff"></div>
<div style="position:absolute;left:1192px;top:1036px;width:1270px;height:2px;background:#e2e2e2"></div>
<div style="position:absolute;left:1192px;top:1087px;width:1270px;height:31px;background:#eff0f0"></div>
<div style="position:absolute;left:1270px;top:994px;width:2px;height:32px;background:#d6d6d6"></div>
<div style="position:absolute;left:1270px;top:1038px;width:2px;height:80px;background:#dcdcdc"></div>
<div style="position:absolute;left:1546px;top:994px;width:2px;height:32px;background:#d6d6d6"></div>
<div style="position:absolute;left:1546px;top:1038px;width:2px;height:80px;background:#dcdcdc"></div>
<div style="position:absolute;left:1802px;top:994px;width:2px;height:32px;background:#d6d6d6"></div>
<div style="position:absolute;left:1802px;top:1038px;width:2px;height:80px;background:#dcdcdc"></div>
<div style="position:absolute;left:2036px;top:994px;width:2px;height:32px;background:#d6d6d6"></div>
<div style="position:absolute;left:2036px;top:1038px;width:2px;height:80px;background:#dcdcdc"></div>
<div style="position:absolute;left:2176px;top:994px;width:2px;height:32px;background:#d6d6d6"></div>
<div style="position:absolute;left:2176px;top:1038px;width:2px;height:80px;background:#dcdcdc"></div>
<div style="position:absolute;left:2430px;top:994px;width:2px;height:32px;background:#d6d6d6"></div>
<div style="position:absolute;left:2430px;top:1038px;width:2px;height:80px;background:#dcdcdc"></div>
<div style="position:absolute;left:1216.00px;top:998px;font-size:27px;line-height:1;color:#000;white-space:nowrap;">#</div>
<div style="position:absolute;left:1275.00px;top:998px;font-size:27px;line-height:1;color:#000;white-space:nowrap;">File/Directory</div>
<div style="position:absolute;left:1553.00px;top:998px;font-size:27px;line-height:1;color:#000;white-space:nowrap;">Wildcard (RegExp)</div>
<div style="position:absolute;left:1807.00px;top:998px;font-size:27px;line-height:1;color:#000;white-space:nowrap;">Exclude wildcard</div>
<div style="position:absolute;left:2041.00px;top:998px;font-size:27px;line-height:1;color:#000;white-space:nowrap;">Required</div>
<div style="position:absolute;left:2180.00px;top:998px;font-size:27px;line-height:1;color:#000;white-space:nowrap;">Include subfolders</div>
<div style="position:absolute;left:1251.00px;top:1049px;font-size:27px;line-height:1;color:#000;white-space:nowrap;">1</div>
<div style="position:absolute;left:1276.00px;top:1049px;font-size:27px;line-height:1;color:#000;white-space:nowrap;letter-spacing:0.350px;">/Users/stefan/tmp/xtf</div>
<div style="position:absolute;left:1551.00px;top:1049px;font-size:27px;line-height:1;color:#000;white-space:nowrap;">(?i).*\.xtf$</div>
<div style="position:absolute;left:2041.00px;top:1049px;font-size:27px;line-height:1;color:#000;white-space:nowrap;">N</div>
<div style="position:absolute;left:2180.00px;top:1049px;font-size:27px;line-height:1;color:#000;white-space:nowrap;">N</div>
<div style="position:absolute;left:1204px;top:1138px;width:286px;height:40px;background:#fff;border-radius:9px;box-shadow:0 0 0 1px rgba(0,0,0,0.06), 0 1px 1.5px rgba(0,0,0,0.22)"></div>
<div style="position:absolute;left:1231.00px;top:1144px;font-size:27px;line-height:1;color:#262626;white-space:nowrap;letter-spacing:0.111px;">Show filename(s)...</div>
<div style="position:absolute;left:370px;top:1278px;width:144px;height:40px;background:#fff;border-radius:9px;box-shadow:0 0 0 1px rgba(0,0,0,0.06), 0 1px 1.5px rgba(0,0,0,0.22)"></div>
<div style="position:absolute;left:431.00px;top:1284px;font-size:27px;line-height:1;color:#262626;white-space:nowrap;letter-spacing:0.667px;">Help</div>
<div style="position:absolute;left:1078px;top:1278px;width:272px;height:40px;background:#fff;border-radius:9px;box-shadow:0 0 0 1px rgba(0,0,0,0.06), 0 1px 1.5px rgba(0,0,0,0.22)"></div>
<div style="position:absolute;left:1203.00px;top:1284px;font-size:27px;line-height:1;color:#262626;white-space:nowrap;letter-spacing:-3.000px;">OK</div>
<div style="position:absolute;left:1386px;top:1278px;width:272px;height:40px;background:#fff;border-radius:9px;box-shadow:0 0 0 1px rgba(0,0,0,0.06), 0 1px 1.5px rgba(0,0,0,0.22)"></div>
<div style="position:absolute;left:1445.00px;top:1284px;font-size:27px;line-height:1;color:#262626;white-space:nowrap;letter-spacing:-0.091px;">Preview rows</div>
<div style="position:absolute;left:1694px;top:1278px;width:272px;height:40px;background:#fff;border-radius:9px;box-shadow:0 0 0 1px rgba(0,0,0,0.06), 0 1px 1.5px rgba(0,0,0,0.22)"></div>
<div style="position:absolute;left:1796.00px;top:1284px;font-size:27px;line-height:1;color:#262626;white-space:nowrap;letter-spacing:-0.200px;">Cancel</div>
<svg style="position:absolute;left:0;top:0" width="2936" height="1886" viewBox="0 0 2936 1886"><path d="M2280,799.6 L2290,809.6 L2280,819.6 L2270,809.6 Z" fill="#1a3556" /><path d="M2283,805.6 Q2277,804.6 2277.5,808.1 Q2278,810.1 2281,810.1 Q2284,811.1 2283,813.6 Q2281,815.1 2277,813.6" fill="none" stroke="#7d93ad" stroke-width="1.6" stroke-linecap="butt" stroke-linejoin="miter" /><path d="M2280,845.8 L2290,855.8 L2280,865.8 L2270,855.8 Z" fill="#1a3556" /><path d="M2283,851.8 Q2277,850.8 2277.5,854.3 Q2278,856.3 2281,856.3 Q2284,857.3 2283,859.8 Q2281,861.3 2277,859.8" fill="none" stroke="#7d93ad" stroke-width="1.6" stroke-linecap="butt" stroke-linejoin="miter" /><path d="M2280,885.7 L2290,895.7 L2280,905.7 L2270,895.7 Z" fill="#1a3556" /><path d="M2283,891.7 Q2277,890.7 2277.5,894.2 Q2278,896.2 2281,896.2 Q2284,897.2 2283,899.7 Q2281,901.2 2277,899.7" fill="none" stroke="#7d93ad" stroke-width="1.6" stroke-linecap="butt" stroke-linejoin="miter" /><circle cx="1212.3" cy="952.3" r="4.6" fill="none" stroke="#bdbdbd" stroke-width="2.6"/><rect x="1196.5" y="960.2" width="31.5" height="8" rx="0" fill="#bdbdbd"/><rect x="1240.5" y="945.6" width="31.5" height="8" rx="0" fill="#bdbdbd"/><circle cx="1256" cy="962.2" r="4.6" fill="none" stroke="#bdbdbd" stroke-width="2.6"/><rect x="1284" y="936" width="2" height="44" rx="0" fill="#cdcdcd"/><rect x="1384" y="936" width="2" height="44" rx="0" fill="#cdcdcd"/><rect x="1440" y="936" width="2" height="44" rx="0" fill="#cdcdcd"/><rect x="1584" y="936" width="2" height="44" rx="0" fill="#cdcdcd"/><rect x="1860" y="936" width="2" height="44" rx="0" fill="#cdcdcd"/><rect x="1959.5" y="936" width="2" height="44" rx="0" fill="#cdcdcd"/><path d="M1304.5,961 L1312,953.5 L1319.5,961" fill="none" stroke="#bdbdbd" stroke-width="2.6" stroke-linecap="butt" stroke-linejoin="miter" /><path d="M1348.5,954 L1356,961.5 L1363.5,954" fill="none" stroke="#bdbdbd" stroke-width="2.6" stroke-linecap="butt" stroke-linejoin="miter" /><path d="M1412,958 L1422,947" fill="none" stroke="#bdbdbd" stroke-width="2.6" stroke-linecap="butt" stroke-linejoin="miter" /><path d="M1403,957 Q1401,962 1406,967 Q1411,971 1415,968 L1418,962 L1410,955 Z" fill="#bdbdbd" /><rect x="1457" y="947" width="22" height="22" rx="0" fill="none" stroke="#1a3556" stroke-width="2.2" stroke-dasharray="2.4 2.4"/><rect x="1464" y="954" width="8" height="8" rx="0" fill="none" stroke="#1a3556" stroke-width="2.8"/><rect x="1501" y="947" width="22" height="22" rx="0" fill="none" stroke="#1a3556" stroke-width="2.2" stroke-dasharray="2.4 2.4"/><path d="M1508,954 L1516,962 M1516,954 L1508,962" fill="none" stroke="#1a3556" stroke-width="2.6" stroke-linecap="butt" stroke-linejoin="miter" /><path d="M1545,946 L1567,946 L1559,957 L1559,970 L1553,966 L1553,957 Z" fill="#1a3556" /><rect x="1604" y="953" width="18" height="17" rx="2" fill="none" stroke="#c8c8c8" stroke-width="2.4"/><path d="M1599,964 L1599,948 Q1599,946 1601,946 L1614,946" fill="none" stroke="#c8c8c8" stroke-width="2.4" stroke-linecap="butt" stroke-linejoin="miter" /><rect x="1646" y="947" width="20" height="23" rx="2" fill="none" stroke="#c8c8c8" stroke-width="2.6"/><rect x="1651" y="943.5" width="10" height="6" rx="1" fill="#c8c8c8"/><circle cx="1692" cy="950" r="4" fill="none" stroke="#c8c8c8" stroke-width="2.4"/><circle cx="1692" cy="966" r="4" fill="none" stroke="#c8c8c8" stroke-width="2.4"/><path d="M1695,953 L1713,969 M1695,963 L1713,947" fill="none" stroke="#c8c8c8" stroke-width="2.6" stroke-linecap="butt" stroke-linejoin="miter" /><rect x="1734" y="946.5" width="20" height="3" rx="0" fill="#bdbdbd"/><path d="M1736,951 L1752,951 L1751,968 Q1751,970 1749,970 L1739,970 Q1737,970 1737,968 Z" fill="#bdbdbd" /><path d="M1777,969 L1785,961 M1798,947 L1790,955" fill="none" stroke="#c8c8c8" stroke-width="2.2" stroke-linecap="butt" stroke-linejoin="miter" /><path d="M1779,962 L1785,962 L1785,968 M1790,949 L1790,955 L1796,955" fill="none" stroke="#c8c8c8" stroke-width="2.2" stroke-linecap="butt" stroke-linejoin="miter" /><rect x="1824" y="950" width="18" height="19" rx="2" fill="none" stroke="#c8c8c8" stroke-width="2.6"/><path d="M1820,964 L1820,946 L1834,946" fill="none" stroke="#c8c8c8" stroke-width="2.6" stroke-linecap="butt" stroke-linejoin="miter" /><path d="M1826,962 L1834,962 M1831,959 L1834,962 L1831,965" fill="none" stroke="#c8c8c8" stroke-width="2" stroke-linecap="butt" stroke-linejoin="miter" /><path d="M1877,961 Q1884,950 1898,957" fill="none" stroke="#c8c8c8" stroke-width="4" stroke-linecap="butt" stroke-linejoin="miter" /><path d="M1873,954 L1873,964 L1884,964 Z" fill="#c8c8c8" /><path d="M1918,957 Q1931,950 1939,961" fill="none" stroke="#c8c8c8" stroke-width="4" stroke-linecap="butt" stroke-linejoin="miter" /><path d="M1944,954 L1944,964 L1933,964 Z" fill="#c8c8c8" /><path d="M1980,948 L1992,948 L1996,952 L1996,970 L1980,970 Z" fill="#d5ecd5" /><path d="M1980,970 L1980,948 L1992,948 L1996,952 L1996,970 Z" fill="none" stroke="#4e6685" stroke-width="1.8" stroke-linecap="butt" stroke-linejoin="miter" /><path d="M1984,955 L1991,963 M1991,955 L1984,963" fill="none" stroke="#1a3556" stroke-width="1.8" stroke-linecap="butt" stroke-linejoin="miter" /><path d="M1974,943 L1980,949" fill="none" stroke="#1a3556" stroke-width="2" stroke-linecap="butt" stroke-linejoin="miter" /><path d="M1981,950 L1981,944 L1975,950 Z" fill="#1a3556" /><path d="M1242.5,1015 L1249,1008.5 L1255.5,1015" fill="none" stroke="#666" stroke-width="2.2" stroke-linecap="butt" stroke-linejoin="miter" /><circle cx="402" cy="1298" r="14.5" fill="none" stroke="#4e6685" stroke-width="3"/><text x="402" y="1307" font-size="24" font-weight="700" text-anchor="middle" fill="#2b4566" font-family="Liberation Sans">?</text></svg>
</body></html>
